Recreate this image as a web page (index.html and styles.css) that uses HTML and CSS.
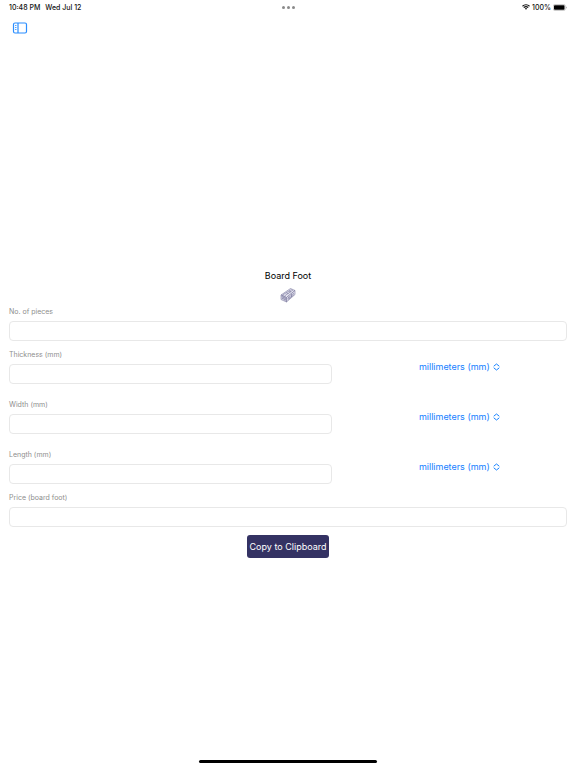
FILE: index.html
```html
<!DOCTYPE html>
<html lang="en">
<head>
  <meta charset="UTF-8">
  <meta name="viewport" content="width=device-width, initial-scale=1.0">
  <title>Board Foot</title>
  <link rel="stylesheet" href="styles.css">
</head>
<body>

  <div class="status-bar">
    <div class="status-left">
      <span>10:48 PM</span>
      <span>Wed Jul 12</span>
    </div>
    <div class="dots"><i></i><i></i><i></i></div>
    <div class="status-right">
      <svg width="8" height="6" viewBox="0 0 16 12" fill="none" stroke="#111" stroke-width="2.4">
        <path d="M1 4.4a10 10 0 0 1 14 0M3.6 7.2a6.3 6.3 0 0 1 8.8 0"/>
        <path d="M5.6 9a3.5 3.5 0 0 1 4.8 0L8 11.6z" fill="#111" stroke="none"/>
      </svg>
      <span>100%</span>
      <svg width="14" height="7" viewBox="0 0 28 14">
        <rect x="0.5" y="1" width="24" height="12" rx="3" fill="none" stroke="#999"/>
        <rect x="2" y="2.5" width="21" height="9" rx="1.5" fill="#000"/>
        <path d="M26 5v4q1.5-.5 1.5-2T26 5z" fill="#999"/>
      </svg>
    </div>
  </div>

  <div class="toolbar">
    <button class="sidebar-btn" aria-label="Sidebar">
      <svg width="16" height="12" viewBox="0 0 16 12" fill="none" stroke="#2b8eff">
        <rect x="1.5" y="1" width="13" height="10" rx="1.5" stroke-width="1.2"/>
        <path d="M6 1v10" stroke-width="1.2"/>
        <path d="M3 3.5h1.5M3 5.5h1.5M3 7.5h1.5" stroke-width=".8"/>
      </svg>
    </button>
  </div>

  <form class="container">
    <h1>Board Foot</h1>
    <svg class="board" width="16" height="16" viewBox="0 0 32 32" fill="#e4e3ef" stroke="#65638d" stroke-width="1" stroke-linejoin="round">
      <path d="M2 16L21 3l9 4-17 14z"/>
      <path d="M2 16l11 5v9L2 25z"/>
      <path d="M13 21L30 7v8L13 30z"/>
      <path d="M5 16L23 5M9 18L26 6M13 12l4 1M18 8l4 2M3 19l9 4M3 22l9 4M6 17v8M10 20v8M15 23L28 12M15 26l13-11M18 19v5M23 14v6" fill="none"/>
    </svg>

    <div class="form-group">
      <label for="pieces">No. of pieces</label>
      <input type="text" id="pieces" inputmode="numeric">
    </div>

    <div class="dimensions">
      <div class="form-row">
        <div class="form-group">
          <label for="thickness">Thickness (mm)</label>
          <input type="text" id="thickness" inputmode="decimal">
        </div>
        <div class="unit">
          <select aria-label="Thickness unit">
            <option>millimeters (mm)</option>
            <option>inches (in)</option>
            <option>feet (ft)</option>
          </select>
          <svg width="7" height="8" viewBox="0 0 7 8"><path d="M1 3l2.5-2L6 3M1 5l2.5 2L6 5"/></svg>
        </div>
      </div>

      <div class="form-row">
        <div class="form-group">
          <label for="width">Width (mm)</label>
          <input type="text" id="width" inputmode="decimal">
        </div>
        <div class="unit">
          <select aria-label="Width unit">
            <option>millimeters (mm)</option>
            <option>inches (in)</option>
            <option>feet (ft)</option>
          </select>
          <svg width="7" height="8" viewBox="0 0 7 8"><path d="M1 3l2.5-2L6 3M1 5l2.5 2L6 5"/></svg>
        </div>
      </div>

      <div class="form-row">
        <div class="form-group">
          <label for="length">Length (mm)</label>
          <input type="text" id="length" inputmode="decimal">
        </div>
        <div class="unit">
          <select aria-label="Length unit">
            <option>millimeters (mm)</option>
            <option>inches (in)</option>
            <option>feet (ft)</option>
          </select>
          <svg width="7" height="8" viewBox="0 0 7 8"><path d="M1 3l2.5-2L6 3M1 5l2.5 2L6 5"/></svg>
        </div>
      </div>
    </div>

    <div class="form-group">
      <label for="price">Price (board foot)</label>
      <input type="text" id="price" inputmode="decimal">
    </div>

    <button type="button" class="copy-btn">Copy to Clipboard</button>
  </form>

  <div class="home-bar"></div>

</body>
</html>
```

FILE: styles.css
```css
* {
  box-sizing: border-box;
}
body {
  font-family: Inter, "Liberation Sans", sans-serif;
  margin: 0;
  min-height: 100vh;
  display: flex;
  flex-direction: column;
  background-color: white;
  color: #111;
}
svg {
  display: block;
  flex: none;
}
.status-bar {
  display: grid;
  grid-template-columns: 1fr auto 1fr;
  align-items: center;
  height: 14px;
  padding: 0 9px;
  font-size: 7px;
  font-weight: 500;
}
.status-left {
  display: flex;
  gap: 5px;
}
.status-right {
  display: flex;
  justify-content: flex-end;
  align-items: center;
  gap: 2px;
}
.dots {
  display: flex;
  gap: 2px;
}
.dots i {
  width: 3px;
  height: 3px;
  border-radius: 50%;
  background-color: #8a8a8a;
}
.toolbar {
  height: 28px;
  padding: 0 12px;
  display: flex;
  align-items: center;
}
.sidebar-btn {
  background: none;
  border: none;
  padding: 0;
  cursor: pointer;
}
.container {
  flex: 1;
  display: flex;
  flex-direction: column;
  justify-content: center;
  gap: 8px;
  padding: 26px 9px 0;
}
h1 {
  margin: 0;
  font-size: 9px;
  line-height: 12px;
  font-weight: 400;
  text-align: center;
  color: black;
}
.board {
  align-self: center;
  margin: -3px 0 -5px;
}
.form-group {
  display: flex;
  flex-direction: column;
  gap: 3px;
}
label {
  font-size: 7px;
  line-height: 12px;
  color: #8e8e8e;
}
input {
  width: 100%;
  height: 20px;
  padding: 0 4px;
  border: 1px solid #e8e8e8;
  border-radius: 4px;
  background-color: white;
  font-family: inherit;
  font-size: 9px;
}
.dimensions {
  display: flex;
  flex-direction: column;
  gap: 15px;
}
.form-row {
  display: grid;
  grid-template-columns: 3fr 2fr;
  gap: 20px;
}
.unit {
  display: flex;
  justify-content: center;
  align-items: center;
  gap: 3px;
}
select {
  appearance: none;
  border: none;
  padding: 0;
  background: none;
  color: #1580ff;
  font-family: inherit;
  font-size: 9px;
  cursor: pointer;
}
.unit path {
  fill: none;
  stroke: #1580ff;
  stroke-linecap: round;
  stroke-linejoin: round;
}
.copy-btn {
  align-self: center;
  height: 23px;
  padding: 0 3px;
  border: none;
  border-radius: 3px;
  background-color: #343263;
  color: white;
  font-family: inherit;
  font-size: 9px;
  cursor: pointer;
}
.home-bar {
  width: 31%;
  height: 3px;
  margin: 0 auto 5px;
  border-radius: 2px;
  background-color: black;
}
```
